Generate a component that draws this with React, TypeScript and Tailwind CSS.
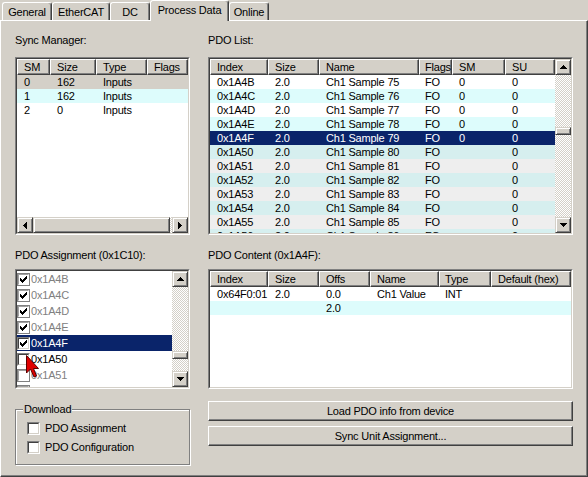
import React from 'react';

type Col = { label: string; w: string; hp?: string; cp?: string };

const syncCols: Col[] = [
  { label: 'SM', w: 'w-[33px]' },
  { label: 'Size', w: 'w-[46px]' },
  { label: 'Type', w: 'w-[51px]' },
  { label: 'Flags', w: 'w-[41px]' },
];

const pdoCols: Col[] = [
  { label: 'Index', w: 'w-[58px]' },
  { label: 'Size', w: 'w-[51px]' },
  { label: 'Name', w: 'w-[100px]' },
  { label: 'Flags', w: 'w-[33px]', hp: 'pl-[5px]', cp: 'pl-[6px]' },
  { label: 'SM', w: 'w-[53px]' },
  { label: 'SU', w: 'w-[50px]' },
];

const contentCols: Col[] = [
  { label: 'Index', w: 'w-[58px]' },
  { label: 'Size', w: 'w-[51px]' },
  { label: 'Offs', w: 'w-[51px]' },
  { label: 'Name', w: 'w-[69px]' },
  { label: 'Type', w: 'w-[52px]', hp: 'pl-[5px]', cp: 'pl-[6px]' },
  { label: 'Default (hex)', w: 'w-[80px]' },
];

const syncRows: { cells: string[]; bg: string }[] = [
  { cells: ['0', '162', 'Inputs', ''], bg: 'bg-[#d4d0c8]' },
  { cells: ['1', '162', 'Inputs', ''], bg: 'bg-[#ddfcfc]' },
  { cells: ['2', '0', 'Inputs', ''], bg: 'bg-white' },
];

const pdoRows = [
  ['0x1A4B', '2.0', 'Ch1 Sample 75', 'FO', '0', '0'],
  ['0x1A4C', '2.0', 'Ch1 Sample 76', 'FO', '0', '0'],
  ['0x1A4D', '2.0', 'Ch1 Sample 77', 'FO', '0', '0'],
  ['0x1A4E', '2.0', 'Ch1 Sample 78', 'FO', '0', '0'],
  ['0x1A4F', '2.0', 'Ch1 Sample 79', 'FO', '0', '0'],
  ['0x1A50', '2.0', 'Ch1 Sample 80', 'FO', '', '0'],
  ['0x1A51', '2.0', 'Ch1 Sample 81', 'FO', '', '0'],
  ['0x1A52', '2.0', 'Ch1 Sample 82', 'FO', '', '0'],
  ['0x1A53', '2.0', 'Ch1 Sample 83', 'FO', '', '0'],
  ['0x1A54', '2.0', 'Ch1 Sample 84', 'FO', '', '0'],
  ['0x1A55', '2.0', 'Ch1 Sample 85', 'FO', '', '0'],
  ['0x1A56', '2.0', 'Ch1 Sample 86', 'FO', '', '0'],
];

function pdoRowBg(i: number) {
  if (i === 4) return 'bg-[#0a246a] text-white';
  if (i < 4) return i % 2 ? 'bg-[#ddfcfc]' : 'bg-white';
  return i % 2 ? 'bg-[#d6efef]' : 'bg-[#eeeeee]';
}

const assignRows = [
  { id: '0x1A4B', checked: true, dim: true },
  { id: '0x1A4C', checked: true, dim: true },
  { id: '0x1A4D', checked: true, dim: true },
  { id: '0x1A4E', checked: true, dim: true },
  { id: '0x1A4F', checked: true, sel: true },
  { id: '0x1A50', checked: false },
  { id: '0x1A51', checked: false, dim: true },
  { id: '0x1A52', checked: false, dim: true },
];

function Sunken({ className = '', children }: { className?: string; children?: React.ReactNode }) {
  return (
    <div className={`border border-t-[#808080] border-l-[#808080] border-r-white border-b-white ${className}`}>
      <div className="relative h-full w-full overflow-hidden border border-t-[#404040] border-l-[#404040] border-r-[#d4d0c8] border-b-[#d4d0c8] bg-white">
        {children}
      </div>
    </div>
  );
}

function Arrow({ dir }: { dir: 'up' | 'down' | 'left' | 'right' }) {
  if (dir === 'up' || dir === 'down') {
    const rows = dir === 'up' ? [[3, 1], [2, 3], [1, 5], [0, 7]] : [[0, 7], [1, 5], [2, 3], [3, 1]];
    return (
      <svg width="7" height="4" viewBox="0 0 7 4" shapeRendering="crispEdges">
        {rows.map(([x, w], y) => (
          <rect key={y} x={x} y={y} width={w} height="1" fill="#000" />
        ))}
      </svg>
    );
  }
  const cols = dir === 'left' ? [[3, 1], [2, 3], [1, 5], [0, 7]] : [[0, 7], [1, 5], [2, 3], [3, 1]];
  return (
    <svg width="4" height="7" viewBox="0 0 4 7" shapeRendering="crispEdges">
      {cols.map(([y, h], x) => (
        <rect key={x} x={x} y={y} width="1" height={h} fill="#000" />
      ))}
    </svg>
  );
}

function ScrollBtn({ dir }: { dir: 'up' | 'down' | 'left' | 'right' }) {
  return (
    <div className="flex h-[16px] w-[16px] shrink-0 items-center justify-center border border-t-[#d4d0c8] border-l-[#d4d0c8] border-r-[#404040] border-b-[#404040] bg-[#d4d0c8] shadow-[inset_1px_1px_0_#fff,inset_-1px_-1px_0_#808080]">
      <Arrow dir={dir} />
    </div>
  );
}

function VScroll({ offset }: { offset: string }) {
  return (
    <div className="flex w-[16px] shrink-0 flex-col">
      <ScrollBtn dir="up" />
      <div className="flex flex-1 flex-col bg-[image:repeating-conic-gradient(#d4d0c8_0%_25%,#ffffff_0%_50%)] bg-[length:2px_2px]">
        <div className={`${offset} shrink-0`} />
        <div className="h-[8px] shrink-0 border border-t-[#d4d0c8] border-l-[#d4d0c8] border-r-[#404040] border-b-[#404040] bg-[#d4d0c8] shadow-[inset_1px_1px_0_#fff,inset_-1px_-1px_0_#808080]" />
      </div>
      <ScrollBtn dir="down" />
    </div>
  );
}

function HeaderRow({ cols }: { cols: Col[] }) {
  return (
    <div className="flex">
      {cols.map((c) => (
        <div
          key={c.label}
          className={`${c.w} ${c.hp ?? 'pl-[6px]'} h-[16px] shrink-0 overflow-hidden whitespace-nowrap border border-t-white border-l-white border-r-[#404040] border-b-[#404040] bg-[#d4d0c8] leading-[14px] shadow-[inset_-1px_-1px_0_#808080]`}
        >
          {c.label}
        </div>
      ))}
    </div>
  );
}

function Row({ cols, cells, bg }: { cols: Col[]; cells: string[]; bg: string }) {
  return (
    <div className={`flex h-[14px] leading-[14px] ${bg}`}>
      {cols.map((c, i) => (
        <div key={c.label} className={`${c.w} ${c.cp ?? 'pl-[7px]'} shrink-0 overflow-hidden whitespace-nowrap`}>
          {cells[i]}
        </div>
      ))}
    </div>
  );
}

function Check() {
  const cols = [2, 3, 4, 3, 2, 1, 0];
  return (
    <svg width="7" height="7" viewBox="0 0 7 7" shapeRendering="crispEdges">
      {cols.map((y, x) => (
        <rect key={x} x={x} y={y} width="1" height="3" fill="#000" />
      ))}
    </svg>
  );
}

function CheckBox({ checked, dim }: { checked?: boolean; dim?: boolean }) {
  return (
    <div
      className={`h-[13px] w-[13px] shrink-0 border ${
        dim ? 'border-[#808080]' : 'border-t-[#808080] border-l-[#808080] border-r-white border-b-white'
      }`}
    >
      <div
        className={`flex h-full w-full items-center justify-center border bg-white ${
          dim ? 'border-t-[#a0a0a0] border-l-[#a0a0a0] border-r-white border-b-white' : 'border-t-[#404040] border-l-[#404040] border-r-[#d4d0c8] border-b-[#d4d0c8]'
        }`}
      >
        {checked && <Check />}
      </div>
    </div>
  );
}

function Cursor() {
  return (
    <svg className="pointer-events-none absolute left-[9px] top-[84px]" width="14" height="24" viewBox="0 0 14 24">
      <polygon
        points="0.5,0.5 0.5,18 4.5,14 8,22 10.5,21 7.5,13.5 12.5,13.5"
        fill="#e00000"
        stroke="#5a0000"
        strokeWidth="1"
        strokeLinejoin="miter"
      />
    </svg>
  );
}

function Tab({ w, children }: { w: string; children: React.ReactNode }) {
  return (
    <div
      className={`${w} h-[18px] shrink-0 rounded-t-[3px] border-t border-l border-r border-t-white border-l-white border-r-[#404040] pt-[2px] text-center leading-[15px] shadow-[inset_-1px_0_0_#808080]`}
    >
      {children}
    </div>
  );
}

export default function App() {
  return (
    <div className="flex h-[477px] w-[588px] select-none flex-col overflow-hidden bg-[#d4d0c8] font-['Liberation_Sans',Arial,sans-serif] text-[11px] tracking-[-0.2px] text-black">
      {/* tabs */}
      <div className="relative z-10 flex h-[20px] items-end pl-[2px]">
        <Tab w="w-[50px]">General</Tab>
        <Tab w="w-[58px]">EtherCAT</Tab>
        <Tab w="w-[40px]">DC</Tab>
        <div className="-mb-[1px] h-[21px] w-[79px] shrink-0 rounded-t-[3px] border-t border-l border-r border-t-white border-l-white border-r-[#404040] bg-[#d4d0c8] pt-[2px] text-center leading-[14px] shadow-[inset_-1px_0_0_#808080]">
          Process Data
        </div>
        <Tab w="w-[40px]">Online</Tab>
      </div>

      {/* panel */}
      <div className="flex flex-1 gap-[18px] border border-t-white border-l-white border-r-[#404040] border-b-[#404040] pl-[14px] shadow-[inset_-1px_-1px_0_#808080]">
        {/* left column */}
        <div className="flex w-[175px] flex-col">
          <div className="mt-[12px] h-[14px] leading-[14px]">Sync Manager:</div>
          <Sunken className="mt-[10px] h-[178px]">
            <div className="flex h-full flex-col">
              <HeaderRow cols={syncCols} />
              {syncRows.map((r) => (
                <Row key={r.cells[0]} cols={syncCols} cells={r.cells} bg={r.bg} />
              ))}
              <div className="flex-1" />
              <div className="flex h-[16px]">
                <ScrollBtn dir="left" />
                <div className="h-[16px] w-[137px] shrink-0 border border-t-[#d4d0c8] border-l-[#d4d0c8] border-r-[#404040] border-b-[#404040] bg-[#d4d0c8] shadow-[inset_1px_1px_0_#fff,inset_-1px_-1px_0_#808080]" />
                <div className="flex-1 bg-[image:repeating-conic-gradient(#d4d0c8_0%_25%,#ffffff_0%_50%)] bg-[length:2px_2px]" />
                <ScrollBtn dir="right" />
              </div>
            </div>
          </Sunken>

          <div className="mt-[13px] h-[14px] leading-[14px]">PDO Assignment (0x1C10):</div>
          <Sunken className="mt-[7px] h-[120px]">
            <div className="flex h-full">
              <div className="flex-1 overflow-hidden">
                {assignRows.map((r) => (
                  <div
                    key={r.id}
                    className={`flex h-[16px] items-center ${
                      r.sel ? 'bg-[#0a246a] text-white' : r.dim ? 'text-[#808080]' : 'text-black'
                    }`}
                  >
                    <CheckBox checked={r.checked} dim={r.dim} />
                    <span className="ml-[1px] leading-[14px]">{r.id}</span>
                  </div>
                ))}
              </div>
              <VScroll offset="h-[64px]" />
            </div>
            <Cursor />
          </Sunken>

          <fieldset className="mt-[13px] border border-[#808080] shadow-[inset_1px_1px_0_#fff,1px_1px_0_#fff]">
            <legend className="ml-[7px] bg-[#d4d0c8] px-[1px] leading-[14px]">Download</legend>
            <div className="mt-[3px] pb-[7px] pl-[11px]">
              <div className="flex h-[19px] items-center">
                <CheckBox />
                <span className="ml-[5px]">PDO Assignment</span>
              </div>
              <div className="flex h-[19px] items-center">
                <CheckBox />
                <span className="ml-[5px]">PDO Configuration</span>
              </div>
            </div>
          </fieldset>
        </div>

        {/* right column */}
        <div className="flex w-[365px] flex-col">
          <div className="mt-[12px] h-[14px] leading-[14px]">PDO List:</div>
          <Sunken className="mt-[10px] h-[178px]">
            <div className="flex h-full">
              <div className="flex-1 overflow-hidden">
                <HeaderRow cols={pdoCols} />
                {pdoRows.map((r, i) => (
                  <Row key={r[0]} cols={pdoCols} cells={r} bg={pdoRowBg(i)} />
                ))}
              </div>
              <VScroll offset="h-[52px]" />
            </div>
          </Sunken>

          <div className="mt-[13px] h-[14px] leading-[14px]">PDO Content (0x1A4F):</div>
          <Sunken className="mt-[7px] h-[120px]">
            <HeaderRow cols={contentCols} />
            <Row cols={contentCols} cells={['0x64F0:01', '2.0', '0.0', 'Ch1 Value', 'INT', '']} bg="bg-white" />
            <Row cols={contentCols} cells={['', '', '2.0', '', '', '']} bg="bg-[#ddfcfc]" />
          </Sunken>

          <button className="mt-[12px] h-[20px] w-full border border-t-white border-l-white border-r-[#404040] border-b-[#404040] bg-[#d4d0c8] text-center leading-[16px] shadow-[inset_-1px_-1px_0_#808080]">
            Load PDO info from device
          </button>
          <button className="mt-[5px] h-[20px] w-full border border-t-white border-l-white border-r-[#404040] border-b-[#404040] bg-[#d4d0c8] text-center leading-[16px] shadow-[inset_-1px_-1px_0_#808080]">
            Sync Unit Assignment...
          </button>
        </div>
      </div>
    </div>
  );
}
